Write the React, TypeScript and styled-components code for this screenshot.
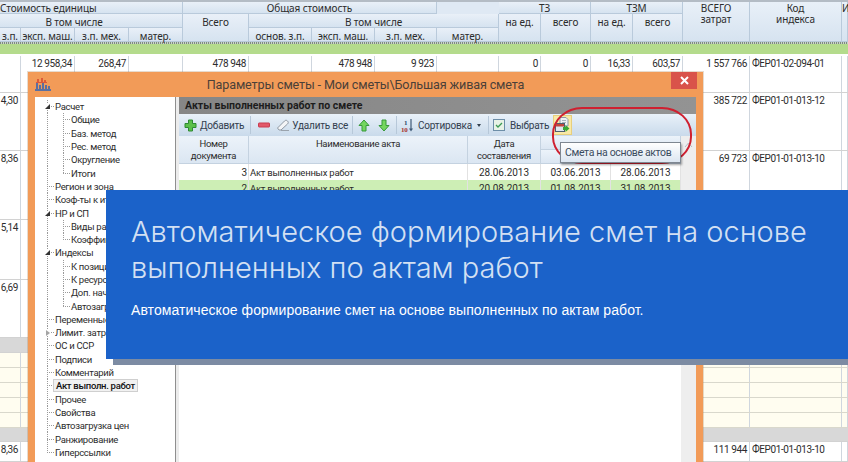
import React from 'react';
import styled, { createGlobalStyle } from 'styled-components';

const UI_FONT = 'Roboto, "Noto Sans", sans-serif';

const GlobalStyle = createGlobalStyle`
    html, body {
        margin: 0;
        padding: 0;
        background: #fff;
    }
`;

const Page = styled.div`
    position: relative;
    width: 848px;
    height: 462px;
    overflow: hidden;
    background: #fff;
    font-family: ${UI_FONT};
    font-size: 10px;
    color: #2c2c2c;
`;

const TRACKS = '21px 54px 54px 54px 66px 63px 63px 62px 62px 42px 50px 42px 50px 67px 92px 6px';

/* ---------- sheet behind the dialog ---------- */

const SheetHead = styled.div`
    display: grid;
    grid-template-columns: ${TRACKS};
    grid-template-rows: 12px 14px 14px;
    border-top: 2px solid #b4bcc5;
    background: #dfe9f4;
`;

const HeadCell = styled.div<{ $col: number; $row: number; $span?: number; $rows?: number; $shift?: number; $top: number }>`
    grid-column: ${({ $col, $span }) => `${$col} / span ${$span || 1}`};
    grid-row: ${({ $row, $rows }) => `${$row} / span ${$rows || 1}`};
    padding-right: ${({ $shift }) => $shift || 0}px;
    padding-top: ${({ $top }) => $top}px;
    text-align: center;
    font-family: "Noto Sans", sans-serif;
    letter-spacing: -0.1px;
    line-height: 11px;
    white-space: pre;
    box-sizing: border-box;
    border-right: 1px solid #b9cadb;
    border-bottom: 1px solid #b9cadb;
    background: linear-gradient(#e9f0f8, #d6e3f0);
`;

const HeadRule = styled.div`
    height: 2px;
    background: repeating-linear-gradient(90deg, #7d8a80 0 1px, #c9d3c8 1px 2px);
`;

const GreenBand = styled.div`
    height: 10px;
    margin-bottom: 2px;
    background: #b4db8c;
`;

const SheetRow = styled.div<{ $h: number; $tone?: 'grey' | 'cream' }>`
    display: grid;
    grid-template-columns: ${TRACKS};
    height: ${({ $h }) => $h}px;
    box-sizing: border-box;
    border-bottom: 1px solid ${({ $tone }) => ($tone === 'cream' ? '#d9d8cc' : '#d2d2d2')};
    background: ${({ $tone }) => ($tone === 'grey' ? '#d8d8d8' : $tone === 'cream' ? '#fffdf0' : '#fff')};
`;

const SheetCell = styled.div<{ $text?: boolean; $bare?: boolean }>`
    display: flex;
    justify-content: ${({ $text }) => ($text ? 'flex-start' : 'flex-end')};
    padding: 0 ${({ $text }) => ($text ? 0 : 2)}px 0 ${({ $text }) => ($text ? 2 : 0)}px;
    letter-spacing: -0.4px;
    line-height: 16px;
    white-space: nowrap;
    box-sizing: border-box;
    border-right: 1px solid ${({ $bare }) => ($bare ? 'transparent' : '#cfd6de')};
`;

/* ---------- dialog ---------- */

const Dialog = styled.section`
    position: absolute;
    left: 28px;
    top: 72px;
    width: 675px;
    height: 390px;
    display: flex;
    flex-direction: column;
    background: #f29b58;
    box-shadow: 0 0 0 1px rgba(160, 110, 60, 0.25);
`;

const TitleBar = styled.header`
    position: relative;
    flex: 0 0 25px;
    display: flex;
    align-items: center;
    justify-content: center;
    font-size: 12.6px;
    letter-spacing: -0.15px;
    color: #4a4038;
`;

const AppIcon = styled.div`
    position: absolute;
    left: 7px;
    top: 6px;
    line-height: 0;
`;

const CloseButton = styled.div`
    position: absolute;
    right: 6px;
    top: 0;
    width: 26px;
    height: 17px;
    display: flex;
    align-items: center;
    justify-content: center;
    background: #d9534a;
`;

const DialogBody = styled.div`
    flex: 1;
    display: flex;
    min-height: 0;
    padding: 0 7px 0 7px;
`;

const TreePanel = styled.nav`
    flex: 0 0 140px;
    box-sizing: border-box;
    padding: 3px 0 0 4px;
    background: #fff;
    font-size: 9.5px;
    letter-spacing: -0.3px;
`;

const Splitter = styled.div`
    flex: 0 0 4px;
    box-sizing: border-box;
    border-left: 1px solid #8f8f8f;
    background: #ececec;
`;

const TreeRow = styled.div`
    display: flex;
    align-items: stretch;
    height: 13.31px;
    line-height: 13px;
    white-space: nowrap;
`;

const Guide = styled.span<{ $kind: 'tee' | 'end' | 'line' }>`
    flex: 0 0 16px;
    display: flex;
    align-items: center;
    justify-content: center;
    background-repeat: no-repeat;
    background-image: repeating-linear-gradient(180deg, #9a9a9a 0 1px, transparent 1px 2px),
        repeating-linear-gradient(90deg, #9a9a9a 0 1px, transparent 1px 2px);
    background-size: ${({ $kind }) =>
        $kind === 'line' ? '1px 100%, 0 0' : $kind === 'end' ? '1px 50%, 8px 1px' : '1px 100%, 8px 1px'};
    background-position: 8px 0, 8px 50%;
`;

const Expander = styled.span<{ $open?: boolean }>`
    width: 0;
    height: 0;
    margin-left: 1px;
    background: #fff;
    ${({ $open }) =>
        $open
            ? 'border-left: 5px solid transparent; border-bottom: 5px solid #333;'
            : 'border-top: 3px solid transparent; border-bottom: 3px solid transparent; border-left: 4px solid #a5a5a5;'}
`;

const TreeLabel = styled.span<{ $active?: boolean }>`
    align-self: center;
    margin-left: ${({ $active }) => ($active ? -2 : 0)}px;
    padding: ${({ $active }) => ($active ? '0 2px 0 2px' : '0')};
    line-height: ${({ $active }) => ($active ? '11px' : '13px')};
    font-weight: ${({ $active }) => ($active ? 500 : 400)};
    color: ${({ $active }) => ($active ? '#111' : '#2c2c2c')};
    background: ${({ $active }) => ($active ? '#f1f1f1' : 'transparent')};
    border: ${({ $active }) => ($active ? '1px solid #cfcfcf' : 'none')};
`;

const ActsPanel = styled.div`
    flex: 1;
    min-width: 0;
    display: flex;
    flex-direction: column;
    background: #fff;
`;

const PanelHeading = styled.div`
    flex: 0 0 17px;
    padding-left: 6px;
    line-height: 17px;
    font-weight: 700;
    font-size: 10.5px;
    color: #1c1c1c;
    background: linear-gradient(90deg, #868686, #939393);
`;

const Toolbar = styled.div`
    flex: 0 0 22px;
    display: flex;
    align-items: center;
    padding-left: 5px;
    font-size: 10px;
    letter-spacing: -0.2px;
    color: #33404e;
    background: linear-gradient(#e9f1f9, #c9daeb);
`;

const ToolButton = styled.div<{ $gap?: number; $ml?: number; $hot?: boolean }>`
    display: flex;
    align-items: center;
    gap: ${({ $gap }) => $gap || 3}px;
    margin-left: ${({ $ml }) => $ml || 0}px;
    white-space: nowrap;
    ${({ $hot }) => $hot && 'padding: 1px; background: #f9e9a6; outline: 1px solid #e8cf7c;'}
`;

const ToolSeparator = styled.span<{ $left: number; $right: number }>`
    width: 1px;
    height: 18px;
    margin: 0 ${({ $right }) => $right}px 0 ${({ $left }) => $left}px;
    background: #b7c8d9;
`;

const Caret = styled.span`
    width: 0;
    height: 0;
    margin-left: 1px;
    border-left: 2px solid transparent;
    border-right: 2px solid transparent;
    border-top: 3px solid #33404e;
`;

const ActsTable = styled.div`
    flex: 1;
    display: flex;
    min-height: 0;
`;

const ActsGrid = styled.div`
    flex: 1;
    display: grid;
    grid-template-columns: 70px 219px 73px 70px 70px;
    grid-template-rows: 14px 14px;
    grid-auto-rows: 16px;
    align-content: start;
`;

const ActsHead = styled.div<{ $col: number; $row: number; $span?: number; $rows?: number }>`
    grid-column: ${({ $col, $span }) => `${$col} / span ${$span || 1}`};
    grid-row: ${({ $row, $rows }) => `${$row} / span ${$rows || 1}`};
    padding-top: 2px;
    box-sizing: border-box;
    font-size: 9.5px;
    letter-spacing: -0.3px;
    line-height: 11.5px;
    text-align: center;
    white-space: pre;
    border-right: 1px solid #c4d2e0;
    border-bottom: 1px solid #c4d2e0;
    background: linear-gradient(#ecf3fa, #dbe6f2);
`;

const ActsCell = styled.div<{ $green?: boolean; $align: string; $tight?: boolean }>`
    display: flex;
    align-items: center;
    justify-content: ${({ $align }) => $align};
    padding: 0 1px;
    box-sizing: border-box;
    white-space: nowrap;
    ${({ $tight }) => $tight && 'font-size: 9.5px; letter-spacing: -0.25px;'}
    border-right: 1px solid #e2e2e2;
    background: ${({ $green }) => ($green ? '#cdeeb5' : '#fff')};
`;

const ScrollTrack = styled.div`
    flex: 0 0 15px;
    display: flex;
    justify-content: center;
    padding-top: 6px;
    box-sizing: border-box;
    background: #eeeeee;
    color: #b5bdc5;
`;

/* ---------- callout over the toolbar ---------- */

const RedOval = styled.div`
    position: absolute;
    left: 552px;
    top: 107px;
    width: 140px;
    height: 57px;
    box-sizing: border-box;
    border: 2px solid #cf2030;
    border-radius: 30px / 27px;
`;

const Tooltip = styled.div`
    position: absolute;
    left: 560px;
    top: 142px;
    width: 121px;
    height: 21px;
    box-sizing: border-box;
    display: flex;
    align-items: center;
    padding-left: 4px;
    font-size: 10.5px;
    letter-spacing: -0.35px;
    white-space: nowrap;
    color: #3b4c60;
    border: 1px solid #7e8791;
    background: linear-gradient(#ffffff, #dce6f1);
    box-shadow: 1px 2px 2px rgba(0, 0, 0, 0.35);
`;

/* ---------- banner ---------- */

const Banner = styled.aside`
    position: absolute;
    left: 106px;
    top: 190px;
    width: 742px;
    height: 169px;
    box-sizing: border-box;
    padding: 24px 20px 0 25px;
    background: #1b62c9;
    box-shadow: 7px 6px 0 #7c8ba3;
    font-family: Inter, "Liberation Sans", sans-serif;
`;

const BannerTitle = styled.h1`
    margin: 0;
    font-size: 29px;
    font-weight: 300;
    line-height: 36px;
    color: #d3e0f3;
`;

const BannerText = styled.p`
    margin: 15px 0 0;
    font-family: "Liberation Sans", Arial, sans-serif;
    font-size: 14px;
    letter-spacing: 0.06px;
    line-height: 18px;
    color: #fff;
`;

/* ---------- data ---------- */

const HEAD = [
    { text: 'Стоимость единицы', col: 1, row: 1, span: 4, shift: 96, top: 1 },
    { text: 'Общая стоимость', col: 5, row: 1, span: 4, top: 1 },
    { text: 'ТЗ', col: 10, row: 1, span: 2, top: 1 },
    { text: 'ТЗМ', col: 12, row: 1, span: 2, top: 1 },
    { text: 'ВСЕГО\nзатрат', col: 14, row: 1, rows: 3, top: 1 },
    { text: 'Код\nиндекса', col: 15, row: 1, rows: 3, top: 1 },
    { text: 'И', col: 16, row: 1, rows: 3, top: 1 },
    { text: 'В том числе', col: 1, row: 2, span: 4, shift: 34, top: 3 },
    { text: 'Всего', col: 5, row: 2, rows: 2, top: 3 },
    { text: 'В том числе', col: 6, row: 2, span: 4, top: 3 },
    { text: 'на ед.', col: 10, row: 2, rows: 2, top: 3 },
    { text: 'всего', col: 11, row: 2, rows: 2, top: 3 },
    { text: 'на ед.', col: 12, row: 2, rows: 2, top: 3 },
    { text: 'всего', col: 13, row: 2, rows: 2, top: 3 },
    { text: 'з.п.', col: 1, row: 3, top: 3 },
    { text: 'эксп. маш.', col: 2, row: 3, top: 3 },
    { text: 'з.п. мех.', col: 3, row: 3, top: 3 },
    { text: 'матер.', col: 4, row: 3, top: 3 },
    { text: 'основ. з.п.', col: 6, row: 3, top: 3 },
    { text: 'эксп. маш.', col: 7, row: 3, top: 3 },
    { text: 'з.п. мех.', col: 8, row: 3, top: 3 },
    { text: 'матер.', col: 9, row: 3, top: 3 },
];

type SheetLine = { h: number; tone?: 'grey' | 'cream'; values: Record<number, string> };

const SHEET: SheetLine[] = [
    {
        h: 37,
        values: {
            1: '12 958,34',
            2: '268,47',
            4: '478 948',
            6: '478 948',
            7: '9 923',
            9: '0',
            10: '0',
            11: '16,33',
            12: '603,57',
            13: '1 557 766',
            14: 'ФЕР01-02-094-01',
        },
    },
    { h: 58, values: { 0: '4,30', 13: '385 722', 14: 'ФЕР01-01-013-12' } },
    { h: 69, values: { 0: '8,36', 13: '69 723', 14: 'ФЕР01-01-013-10' } },
    { h: 60, values: { 0: '5,14' } },
    { h: 58, values: { 0: '6,69' } },
    { h: 15, tone: 'grey', values: {} },
    { h: 15, tone: 'cream', values: {} },
    { h: 15, tone: 'cream', values: {} },
    { h: 15, tone: 'cream', values: {} },
    { h: 15, tone: 'cream', values: {} },
    { h: 15, tone: 'cream', values: {} },
    { h: 14, tone: 'grey', values: {} },
    { h: 20, values: { 0: '8,36', 13: '111 944', 14: 'ФЕР01-01-013-10' } },
];

const TREE: { label: string; level: 0 | 1; last?: boolean; open?: boolean; closed?: boolean; active?: boolean; end?: boolean }[] = [
    { label: 'Расчет', level: 0, open: true },
    { label: 'Общие', level: 1 },
    { label: 'Баз. метод', level: 1 },
    { label: 'Рес. метод', level: 1 },
    { label: 'Округление', level: 1 },
    { label: 'Итоги', level: 1, last: true },
    { label: 'Регион и зона', level: 0 },
    { label: 'Коэф-ты к итогу', level: 0 },
    { label: 'НР и СП', level: 0, open: true },
    { label: 'Виды работ', level: 1 },
    { label: 'Коэффициенты', level: 1, last: true },
    { label: 'Индексы', level: 0, open: true },
    { label: 'К позициям', level: 1 },
    { label: 'К ресурсам', level: 1 },
    { label: 'Доп. начисления', level: 1 },
    { label: 'Автозагрузка', level: 1, last: true },
    { label: 'Переменные', level: 0 },
    { label: 'Лимит. затрат', level: 0, closed: true },
    { label: 'ОС и ССР', level: 0 },
    { label: 'Подписи', level: 0 },
    { label: 'Комментарий', level: 0 },
    { label: 'Акт выполн. работ', level: 0, active: true },
    { label: 'Прочее', level: 0 },
    { label: 'Свойства', level: 0 },
    { label: 'Автозагрузка цен', level: 0 },
    { label: 'Ранжирование', level: 0 },
    { label: 'Гиперссылки', level: 0, end: true },
];

const ACTS = [
    { no: '3', name: 'Акт выполненных работ', made: '28.06.2013', from: '03.06.2013', to: '28.06.2013' },
    { no: '2', name: 'Акт выполненных работ', made: '20.08.2013', from: '01.08.2013', to: '31.08.2013', green: true },
];

/* ---------- small drawings ---------- */

const PlusIcon = () => (
    <svg width="13" height="13" viewBox="0 0 13 13">
        <path d="M4.5 1h4v3.500H12v4H8.500V12h-4V8.500H1v-4h3.500z" fill="#5cc04a" stroke="#2f8a33" />
    </svg>
);

const MinusIcon = () => (
    <svg width="12" height="12" viewBox="0 0 12 12">
        <rect x="0.500" y="4" width="11" height="4" rx="0.500" fill="#e2596a" stroke="#c93c50" />
    </svg>
);

const EraserIcon = () => (
    <svg width="14" height="13" viewBox="0 0 14 13">
        <path d="M1.500 9 8.500 2c1-1 2-1 3 0s1 2 0 3L5 11H3z" fill="#f4f5f7" stroke="#8f98a3" />
        <path d="M5 11.500h8" stroke="#9aa3ad" />
    </svg>
);

const ArrowIcon = ({ down }: { down?: boolean }) => (
    <svg width="12" height="13" viewBox="0 0 12 13">
        <path
            d={down ? 'M4 1h4v5.500h3L6 12 1 6.500h3z' : 'M4 12h4V6.500h3L6 1 1 6.500h3z'}
            fill="#74d65f"
            stroke="#37993a"
        />
    </svg>
);

const SortIcon = () => (
    <svg width="13" height="15" viewBox="0 0 13 15">
        <path d="M10 1v11" stroke="#3f5a78" strokeWidth="1.200" />
        <path d="m8 10.500 2 3 2-3z" fill="#3f5a78" />
        <text x="3" y="6.500" fontSize="7" fontWeight="700" fill="#2f4a68" fontFamily="Liberation Serif">1</text>
        <text x="0" y="14" fontSize="7" fontWeight="700" fill="#a8352c" fontFamily="Liberation Serif">10</text>
    </svg>
);

const CheckIcon = () => (
    <svg width="12" height="12" viewBox="0 0 12 12">
        <rect x="0.500" y="0.500" width="11" height="11" fill="#e8f2e6" stroke="#6d8ea8" />
        <path d="m3 6 2 2 4-4" fill="none" stroke="#3d9a54" strokeWidth="1.300" />
    </svg>
);

const EstimateIcon = () => (
    <svg width="15" height="16" viewBox="0 0 15 16">
        <path d="M5 .5h6l2 2V9H5z" fill="#eef1f5" stroke="#8c9aa8" />
        <path d="M7 3.500h4M7 5.500h4" stroke="#aab4bf" />
        <rect x="0.500" y="6.500" width="9" height="8" fill="#dfe7ef" stroke="#4f5f70" />
        <rect x="1" y="7" width="8" height="2.500" fill="#c2453c" />
        <path d="M8 10h2.500V8l4 3.500-4 3.500v-2H8z" fill="#39a935" />
    </svg>
);

const ChartIcon = () => (
    <svg width="16" height="13" viewBox="0 0 16 13">
        <path d="M3 1v3M7 0v4M10 2v2" stroke="#cf3a2a" strokeWidth="1.300" />
        <path d="M1 4.500h11" stroke="#d8573f" />
        <path d="M2 5v6M5 7v4M8 5v6M11 7v4M14 8v3" stroke="#2a62b8" strokeWidth="1.500" />
        <path d="M0 12h16" stroke="#2a62b8" strokeWidth="1.500" />
    </svg>
);

const CrossIcon = () => (
    <svg width="9" height="9" viewBox="0 0 9 9">
        <path d="m1 1 7 7M8 1 1 8" stroke="#fff" strokeWidth="2" />
    </svg>
);

const App: React.FC = () => (
    <Page>
        <GlobalStyle />
        <SheetHead>
            {HEAD.map((cell) => (
                <HeadCell
                    key={`${cell.col}-${cell.row}`}
                    $col={cell.col}
                    $row={cell.row}
                    $span={cell.span}
                    $rows={cell.rows}
                    $shift={cell.shift}
                    $top={cell.top}
                >
                    {cell.text}
                </HeadCell>
            ))}
        </SheetHead>
        <HeadRule />
        <GreenBand />
        {SHEET.map((line, index) => (
            <SheetRow key={`sheet-${index}`} $h={line.h} $tone={line.tone}>
                {Array.from({ length: 16 }, (_, col) => (
                    <SheetCell key={col} $text={col === 14} $bare={line.tone === 'grey'}>
                        {line.values[col]}
                    </SheetCell>
                ))}
            </SheetRow>
        ))}

        <Dialog>
            <TitleBar>
                <AppIcon>
                    <ChartIcon />
                </AppIcon>
                Параметры сметы - Мои сметы\Большая живая смета
                <CloseButton>
                    <CrossIcon />
                </CloseButton>
            </TitleBar>
            <DialogBody>
                <TreePanel>
                    {TREE.map((item) => (
                        <TreeRow key={item.label}>
                            <Guide $kind={item.level === 1 ? 'line' : item.end ? 'end' : 'tee'}>
                                {(item.open || item.closed) && <Expander $open={item.open} />}
                            </Guide>
                            {item.level === 1 && <Guide $kind={item.last ? 'end' : 'tee'} />}
                            <TreeLabel $active={item.active}>{item.label}</TreeLabel>
                        </TreeRow>
                    ))}
                </TreePanel>
                <Splitter />
                <ActsPanel>
                    <PanelHeading>Акты выполненных работ по смете</PanelHeading>
                    <Toolbar>
                        <ToolButton>
                            <PlusIcon />
                            Добавить
                        </ToolButton>
                        <ToolSeparator $left={6} $right={7} />
                        <MinusIcon />
                        <ToolButton $gap={2} $ml={6}>
                            <EraserIcon />
                            Удалить все
                        </ToolButton>
                        <ToolSeparator $left={4} $right={5} />
                        <ArrowIcon />
                        <ToolButton $ml={8}>
                            <ArrowIcon down />
                        </ToolButton>
                        <ToolSeparator $left={6} $right={4} />
                        <ToolButton $gap={4}>
                            <SortIcon />
                            Сортировка
                            <Caret />
                        </ToolButton>
                        <ToolSeparator $left={7} $right={4} />
                        <ToolButton $gap={5}>
                            <CheckIcon />
                            Выбрать
                        </ToolButton>
                        <ToolButton $hot $ml={5}>
                            <EstimateIcon />
                        </ToolButton>
                    </Toolbar>
                    <ActsTable>
                        <ActsGrid>
                            <ActsHead $col={1} $row={1} $rows={2}>
                                {'Номер\nдокумента'}
                            </ActsHead>
                            <ActsHead $col={2} $row={1} $rows={2}>
                                Наименование акта
                            </ActsHead>
                            <ActsHead $col={3} $row={1} $rows={2}>
                                {'Дата\nсоставления'}
                            </ActsHead>
                            <ActsHead $col={4} $row={1} $span={2} />
                            <ActsHead $col={4} $row={2} />
                            <ActsHead $col={5} $row={2} />
                            {ACTS.map((act) => (
                                <React.Fragment key={act.no}>
                                    <ActsCell $green={act.green} $align="flex-end">
                                        {act.no}
                                    </ActsCell>
                                    <ActsCell $green={act.green} $align="flex-start" $tight>
                                        {act.name}
                                    </ActsCell>
                                    <ActsCell $green={act.green} $align="center">
                                        {act.made}
                                    </ActsCell>
                                    <ActsCell $green={act.green} $align="center">
                                        {act.from}
                                    </ActsCell>
                                    <ActsCell $green={act.green} $align="center">
                                        {act.to}
                                    </ActsCell>
                                </React.Fragment>
                            ))}
                        </ActsGrid>
                        <ScrollTrack>
                            <svg width="9" height="6" viewBox="0 0 9 6">
                                <path d="m1 5 3.500-4L8 5" fill="none" stroke="currentColor" />
                            </svg>
                        </ScrollTrack>
                    </ActsTable>
                </ActsPanel>
            </DialogBody>
        </Dialog>

        <RedOval />
        <Tooltip>Смета на основе актов</Tooltip>

        <Banner>
            <BannerTitle>Автоматическое формирование смет на основе выполненных по актам работ</BannerTitle>
            <BannerText>Автоматическое формирование смет на основе выполненных по актам работ.</BannerText>
        </Banner>
    </Page>
);

export default App;
